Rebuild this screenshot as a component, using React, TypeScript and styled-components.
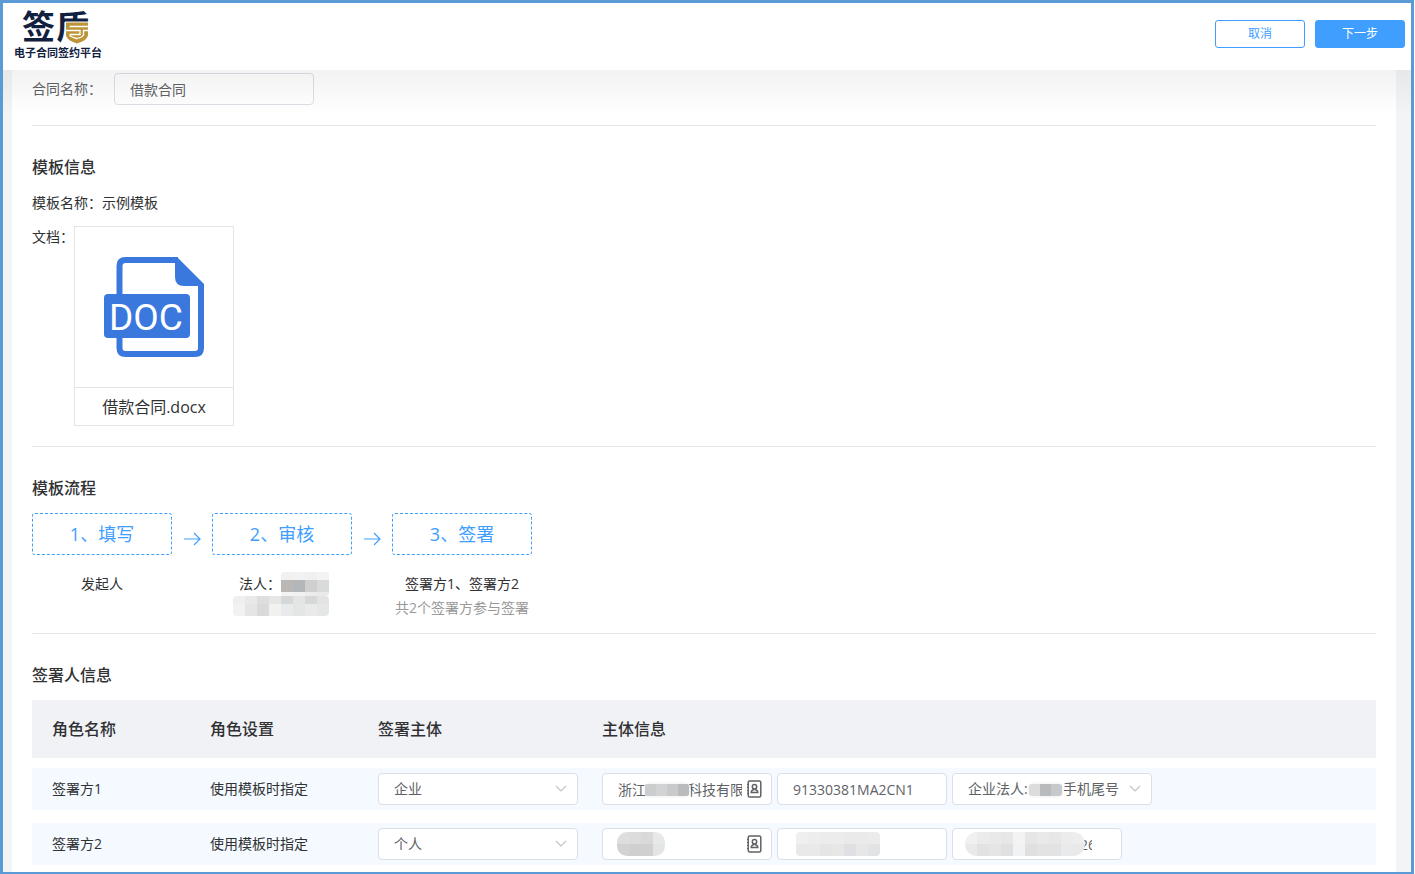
import React, { useId, useState } from 'react';
import styled, { createGlobalStyle } from 'styled-components';

const GlobalStyle = createGlobalStyle`
  * { box-sizing: border-box; }
  body {
    margin: 0;
    background: #fff;
    color: #303133;
    font-family: "Open Sans", "Noto Sans CJK SC", sans-serif;
    font-size: 14px;
    line-height: 22px;
  }
  button, input, select { font: inherit; }
`;

const Frame = styled.div`
  display: flex;
  flex-direction: column;
  min-height: 100vh;
  margin-right: 1px;
  border: 3px solid #5b9bd5;
  border-bottom-width: 2px;
  background: #f3f4f6;
`;

const Header = styled.header`
  position: relative;
  display: flex;
  justify-content: space-between;
  align-items: flex-start;
  height: 67px;
  padding: 0 6px 0 9px;
  background: #fff;

  &::after {
    content: "";
    position: absolute;
    z-index: 2;
    top: 100%;
    left: 0;
    right: 0;
    height: 44px;
    background: linear-gradient(rgba(0, 0, 0, 0.05), rgba(0, 0, 0, 0.03) 40%, rgba(0, 0, 0, 0));
    pointer-events: none;
  }
`;

const LogoSvg = styled.svg`
  overflow: visible;
`;

const Actions = styled.div`
  display: flex;
  gap: 10px;
  padding-top: 17px;
`;

const Button = styled.button<{ $primary?: boolean }>`
  width: 90px;
  height: 28px;
  padding: 0;
  border: 1px solid #409eff;
  border-radius: 3px;
  background: ${(p) => (p.$primary ? '#409eff' : '#fff')};
  color: ${(p) => (p.$primary ? '#fff' : '#409eff')};
  font-size: 12px;
  line-height: 24px;
  cursor: pointer;
`;

const Panel = styled.main`
  flex: 1;
  margin: 0 15px 0 9px;
  padding: 0 20px;
  background: #fff;
`;

const Section = styled.section<{ $top?: number; $bottom?: number }>`
  padding: ${(p) => p.$top ?? 30}px 0 ${(p) => p.$bottom ?? 20}px;
  border-bottom: 1px solid #e4e4e4;

  &:last-child { border-bottom: 0; padding-bottom: 0; }
`;

const Title = styled.h2`
  margin: 0 0 14px;
  font-size: 16px;
  font-weight: 500;
  line-height: 22px;
`;

const FormRow = styled.div`
  display: flex;
  align-items: center;
`;

const FormLabel = styled.label`
  width: 82px;
  color: #606266;
`;

const Field = styled.div<{ $width: number }>`
  position: relative;
  width: ${(p) => p.$width}px;
`;

const TextInput = styled.input<{ $affix?: boolean }>`
  display: block;
  width: 100%;
  height: 32px;
  padding: 0 ${(p) => (p.$affix ? 29 : 15)}px 0 15px;
  border: 1px solid #dcdfe6;
  border-radius: 4px;
  background: #fff;
  color: #606266;
`;

const SelectBox = styled.select`
  display: block;
  appearance: none;
  width: 100%;
  height: 32px;
  padding: 0 28px 0 15px;
  border: 1px solid #dcdfe6;
  border-radius: 4px;
  background: #fff;
  color: #606266;
`;

const Suffix = styled.span<{ $right: number }>`
  position: absolute;
  top: 0;
  right: ${(p) => p.$right}px;
  display: flex;
  align-items: center;
  height: 32px;
  pointer-events: none;
`;

const Mask = styled.span<{ $left: number; $top: number }>`
  position: absolute;
  left: ${(p) => p.$left}px;
  top: ${(p) => p.$top}px;
  display: flex;
  pointer-events: none;
`;

const Line = styled.p`
  margin: 0 0 12px;
`;

const DocRow = styled.div`
  display: flex;
`;

const DocLabel = styled.span`
  width: 42px;
`;

const DocCard = styled.figure`
  width: 160px;
  height: 200px;
  margin: 0;
  border: 1px solid #e4e4e4;
`;

const DocPreview = styled.div`
  display: flex;
  align-items: center;
  justify-content: center;
  height: 161px;
  border-bottom: 1px solid #e4e4e4;
`;

const DocName = styled.figcaption`
  font-size: 16px;
  line-height: 38px;
  text-align: center;
`;

const Steps = styled.ol`
  display: flex;
  margin: 0;
  padding: 0;
  list-style: none;
`;

const Step = styled.li`
  display: flex;
`;

const StepBody = styled.div`
  width: 140px;
`;

const StepBox = styled.div`
  height: 42px;
  margin-bottom: 17px;
  border: 1px dashed #409eff;
  border-radius: 3px;
  color: #409eff;
  font-size: 18px;
  line-height: 40px;
  text-align: center;
`;

const StepText = styled.div<{ $muted?: boolean }>`
  color: ${(p) => (p.$muted ? '#999' : 'inherit')};
  line-height: 24px;
  text-align: center;
  white-space: nowrap;
`;

const Reviewer = styled.div`
  display: flex;
  flex-direction: column;
  align-items: flex-end;
  padding-right: 23px;
`;

const ReviewerLine = styled.div`
  display: flex;
  height: 24px;
  line-height: 24px;
`;

const StepArrow = styled.span`
  display: flex;
  justify-content: center;
  width: 40px;
  padding-top: 18px;
`;

const Table = styled.table`
  width: 100%;
  table-layout: fixed;
  border-collapse: separate;
  border-spacing: 0;
`;

const Th = styled.th<{ $width?: number }>`
  width: ${(p) => (p.$width ? `${p.$width}px` : 'auto')};
  height: 58px;
  padding: 0;
  background: #f1f2f6;
  font-size: 16px;
  font-weight: 500;
  text-align: left;

  &:first-child { padding-left: 20px; }
`;

const Td = styled.td`
  height: 55px;
  padding: 0;
  border: solid transparent;
  border-width: 10px 0 3px;
  background: #f4faff;
  background-clip: padding-box;

  &:first-child { padding-left: 20px; }
`;

const FieldGroup = styled.div`
  display: flex;
  gap: 5px;
`;

function Mosaic({ cell = 12, colors, heights, radius = 0, halo = 0 }: {
  cell?: number; colors: string[][]; heights?: number[]; radius?: number; halo?: number;
}) {
  const id = useId();
  const rows = colors.map((_, i) => heights?.[i] ?? 12);
  const w = colors[0].length * cell;
  const h = rows.reduce((a, b) => a + b, 0);
  const rowTop = (i: number) => halo + rows.slice(0, i).reduce((a, b) => a + b, 0);
  return (
    <svg width={w + halo * 2} height={h + halo * 2} aria-hidden="true">
      {halo > 0 && <rect width={w + halo * 2} height={h + halo * 2} rx={h / 2 + halo} fill="#f7f7f8" />}
      <clipPath id={id}>
        <rect x={halo} y={halo} width={w} height={h} rx={radius} />
      </clipPath>
      <g clipPath={`url(#${id})`} shapeRendering="crispEdges">
        {colors.map((row, y) => row.map((c, x) => (
          <rect key={`${x}-${y}`} x={halo + x * cell} y={rowTop(y)} width={cell} height={rows[y]} fill={c} />
        )))}
      </g>
    </svg>
  );
}

const Logo = () => (
  <LogoSvg width="94" height="60" viewBox="0 0 94 60" role="img" aria-label="签盾 电子合同签约平台">
    <g fill="#12203f" fontFamily='"Noto Sans CJK SC", sans-serif' fontWeight="700">
      <text x="10" y="36" fontSize="33">签</text>
      <text x="44" y="36" fontSize="33">盾</text>
      <text x="2" y="54" fontSize="11">电子合同签约平台</text>
    </g>
    <path d="M53 18.500h25V42H53z" fill="#fff" />
    <path d="M54 19.500h22v12.500q0 5-11 8.500-11-3.500-11-8.500z" fill="#bd9539" />
    <path d="M57.500 23.500H76M54 27.500h14v4H57.500M76 27.500h-4.500v4.500q-2 3-7 3.500-4-1-7-3" fill="none" stroke="#fff" strokeWidth="1.300" />
  </LogoSvg>
);

const DocIcon = () => (
  <svg width="100" height="100" viewBox="0 0 100 100" aria-hidden="true">
    <path d="M15.500 40V9q0-6 6-6H74M97 28v63q0 6-6 6H21.500q-6 0-6-6V78" fill="none" stroke="#3a78dd" strokeWidth="6" />
    <path d="M71 0h2l27 27v2H80q-9 0-9-9z" fill="#3a78dd" />
    <rect y="37" width="86" height="44" rx="4" fill="#3a78dd" />
    <text x="42" y="73" fontFamily="Roboto, sans-serif" fontSize="37" fill="#fff" textAnchor="middle">DOC</text>
  </svg>
);

const ArrowIcon = () => (
  <svg width="18" height="16" viewBox="0 0 18 16" fill="none" stroke="#409eff" strokeWidth="1.200" aria-hidden="true">
    <path d="M1 8h16M11 2l6 6-6 6" />
  </svg>
);

const Chevron = () => (
  <svg width="12" height="8" viewBox="0 0 12 8" fill="none" stroke="#c0c4cc" strokeWidth="1.200" aria-hidden="true">
    <path d="M1 1l5 5 5-5" />
  </svg>
);

const ContactIcon = () => (
  <svg width="15" height="18" viewBox="0 0 15 18" fill="none" stroke="#606266" aria-hidden="true">
    <rect x="1.200" y="1" width="12.600" height="16" rx="1.500" strokeWidth="1.500" />
    <path d="M0 4.500h2M0 7.500h2M0 10.500h2M0 13.500h2" strokeWidth="1" />
    <circle cx="7.500" cy="6.800" r="2.200" strokeWidth="1.500" />
    <path d="M6.500 8.500v1.200q-2.300.5-2.300 2.800h6.600q0-2.300-2.300-2.800V8.500" strokeWidth="1.500" />
  </svg>
);

function PartySelect({ options, label, width = 200, children }: {
  options: string[]; label: string; width?: number; children?: React.ReactNode;
}) {
  return (
    <Field $width={width}>
      <SelectBox aria-label={label}>
        {options.map((o) => <option key={o}>{o}</option>)}
      </SelectBox>
      <Suffix $right={11}><Chevron /></Suffix>
      {children}
    </Field>
  );
}

function PartyInput({ value, label, contact, clipped, children }: {
  value: string; label: string; contact?: boolean; clipped?: boolean; children?: React.ReactNode;
}) {
  return (
    <Field $width={170}>
      <TextInput aria-label={label} defaultValue={value} $affix={contact || clipped} />
      {contact && <Suffix $right={10}><ContactIcon /></Suffix>}
      {children}
    </Field>
  );
}

export default function App() {
  const [name, setName] = useState('借款合同');
  return (
    <>
      <GlobalStyle />
      <Frame>
        <Header>
          <Logo />
          <Actions>
            <Button type="button">取消</Button>
            <Button type="button" $primary>下一步</Button>
          </Actions>
        </Header>
        <Panel>
          <Section $top={3}>
            <FormRow>
              <FormLabel htmlFor="contract-name">合同名称：</FormLabel>
              <Field $width={200}>
                <TextInput id="contract-name" value={name} onChange={(e) => setName(e.target.value)} />
              </Field>
            </FormRow>
          </Section>

          <Section>
            <Title>模板信息</Title>
            <Line>模板名称：示例模板</Line>
            <DocRow>
              <DocLabel>文档：</DocLabel>
              <DocCard>
                <DocPreview><DocIcon /></DocPreview>
                <DocName>借款合同.docx</DocName>
              </DocCard>
            </DocRow>
          </Section>

          <Section $bottom={13}>
            <Title>模板流程</Title>
            <Steps>
              <Step>
                <StepBody>
                  <StepBox>1、填写</StepBox>
                  <StepText>发起人</StepText>
                </StepBody>
                <StepArrow><ArrowIcon /></StepArrow>
              </Step>
              <Step>
                <StepBody>
                  <StepBox>2、审核</StepBox>
                  <Reviewer>
                    <ReviewerLine>
                      <span>法人：</span>
                      <Mosaic radius={3} heights={[8, 12, 4]} colors={[
                        ['#f1f1f1', '#f2f2f2', '#f0f0f0', '#f3f3f3'],
                        ['#bab7b5', '#b4b7ba', '#cfcfd0', '#d8dadc'],
                        ['#f3f3f3', '#f1f1f1', '#ececec', '#e9e9e9'],
                      ]} />
                    </ReviewerLine>
                    <ReviewerLine>
                      <Mosaic radius={4} heights={[8, 12]} colors={[
                        ['#efefef', '#e9e9ea', '#dedede', '#e6e6e6', '#d5d8d9', '#e4e4e5', '#d6d7d7', '#e3e3e4'],
                        ['#f2f2f3', '#e5e5e6', '#dadadb', '#f1f1f0', '#e9eaeb', '#e4e5e5', '#eaeaea', '#e5e6e7'],
                      ]} />
                    </ReviewerLine>
                  </Reviewer>
                </StepBody>
                <StepArrow><ArrowIcon /></StepArrow>
              </Step>
              <Step>
                <StepBody>
                  <StepBox>3、签署</StepBox>
                  <StepText>签署方1、签署方2</StepText>
                  <StepText $muted>共2个签署方参与签署</StepText>
                </StepBody>
              </Step>
            </Steps>
          </Section>

          <Section>
            <Title>签署人信息</Title>
            <Table>
              <thead>
                <tr>
                  <Th $width={178}>角色名称</Th>
                  <Th $width={168}>角色设置</Th>
                  <Th $width={224}>签署主体</Th>
                  <Th>主体信息</Th>
                </tr>
              </thead>
              <tbody>
                <tr>
                  <Td>签署方1</Td>
                  <Td>使用模板时指定</Td>
                  <Td><PartySelect label="签署主体" options={['企业', '个人']} /></Td>
                  <Td>
                    <FieldGroup>
                      <PartyInput label="企业名称" contact value={'浙江\u3000\u3000\u3000科技有限'}>
                        <Mask $left={41} $top={9}>
                          <Mosaic halo={2} radius={2} cell={11} colors={[['#cbcccd', '#d2d3d5', '#c8cacc', '#b9bbbd']]} />
                        </Mask>
                      </PartyInput>
                      <PartyInput label="企业证件号" value="91330381MA2CN1" />
                      <PartySelect label="经办人" options={['企业法人:\u3000\u3000\u00a0\u00a0手机尾号']}>
                        <Mask $left={75} $top={9}>
                          <Mosaic halo={2} radius={3} cell={11} colors={[['#dcdcdc', '#b9babb', '#c7cacd']]} />
                        </Mask>
                      </PartySelect>
                    </FieldGroup>
                  </Td>
                </tr>
                <tr>
                  <Td>签署方2</Td>
                  <Td>使用模板时指定</Td>
                  <Td><PartySelect label="签署主体" options={['个人', '企业']} /></Td>
                  <Td>
                    <FieldGroup>
                      <PartyInput label="姓名" contact value="">
                        <Mask $left={15} $top={4}>
                          <Mosaic radius={10} colors={[
                            ['#dededf', '#dcdcdd', '#d9d9da', '#e7e8e9'],
                            ['#d2d2d3', '#cfcfd0', '#d0d0d1', '#e3e4e6'],
                          ]} />
                        </Mask>
                      </PartyInput>
                      <PartyInput label="证件号" value="">
                        <Mask $left={19} $top={4}>
                          <Mosaic radius={4} colors={[
                            ['#efeff0', '#ededee', '#ececed', '#ececec', '#eaeaeb', '#eaeaeb', '#ebebec'],
                            ['#e8e9ea', '#e9e9ea', '#e5e5e6', '#e7e7e8', '#dfe0e3', '#e7e7e8', '#e2e3e5'],
                          ]} />
                        </Mask>
                      </PartyInput>
                      <PartyInput label="手机号" clipped value={'\u3000\u3000\u3000\u3000\u3000\u3000\u3000\u300026'}>
                        <Mask $left={13} $top={4}>
                          <Mosaic radius={12} colors={[
                            ['#f0f0f0', '#ebebec', '#e9e9ea', '#e9e6e7', '#f3f3f4', '#e6e6e7', '#e9e9ea', '#e7e7e8', '#ececed', '#eeeeee'],
                            ['#e9e9ea', '#e3e2e3', '#e5e5e6', '#e0e0e1', '#f0f2f3', '#e0e0e1', '#e3e3e4', '#e2e3e4', '#e9eaeb', '#e9e9ea'],
                          ]} />
                        </Mask>
                      </PartyInput>
                    </FieldGroup>
                  </Td>
                </tr>
              </tbody>
            </Table>
          </Section>
        </Panel>
      </Frame>
    </>
  );
}
